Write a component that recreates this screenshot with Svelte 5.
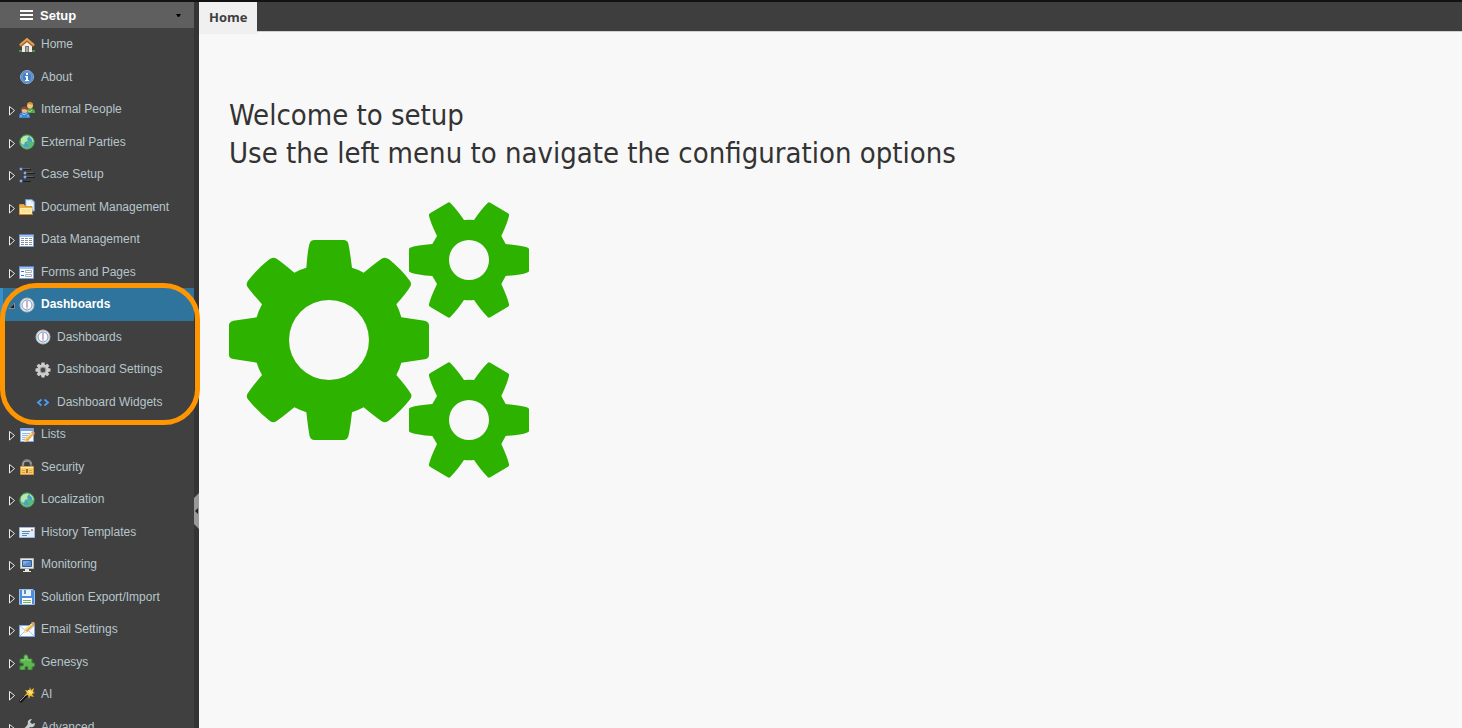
<script lang="ts">
	type MenuItem = {
		label: string;
		icon: string;
		expandable?: boolean;
		sub?: boolean;
	};

	const items: MenuItem[] = [
		{ label: 'Home', icon: 'home' },
		{ label: 'About', icon: 'info' },
		{ label: 'Internal People', icon: 'people', expandable: true },
		{ label: 'External Parties', icon: 'globe', expandable: true },
		{ label: 'Case Setup', icon: 'tree', expandable: true },
		{ label: 'Document Management', icon: 'folder', expandable: true },
		{ label: 'Data Management', icon: 'table', expandable: true },
		{ label: 'Forms and Pages', icon: 'form', expandable: true },
		{ label: 'Dashboards', icon: 'gauge', expandable: true },
		{ label: 'Dashboards', icon: 'gauge', sub: true },
		{ label: 'Dashboard Settings', icon: 'cog', sub: true },
		{ label: 'Dashboard Widgets', icon: 'code', sub: true },
		{ label: 'Lists', icon: 'list', expandable: true },
		{ label: 'Security', icon: 'lock', expandable: true },
		{ label: 'Localization', icon: 'globe', expandable: true },
		{ label: 'History Templates', icon: 'card', expandable: true },
		{ label: 'Monitoring', icon: 'monitor', expandable: true },
		{ label: 'Solution Export/Import', icon: 'disk', expandable: true },
		{ label: 'Email Settings', icon: 'mail', expandable: true },
		{ label: 'Genesys', icon: 'puzzle', expandable: true },
		{ label: 'AI', icon: 'wand', expandable: true },
		{ label: 'Advanced', icon: 'wrench', expandable: true }
	];

	let selected = $state(8);

	function select(index: number, event: MouseEvent) {
		event.preventDefault();
		selected = index;
	}
</script>

{#snippet menuIcon(name: string)}
	<svg class="icon" viewBox="0 0 16 16" aria-hidden="true">
		{#if name === 'home'}
			<path d="M0 13h16v2H0z" fill="#3f9a35" />
			<path d="M3 7l5-4 5 4v8H3z" fill="#f1eeea" />
			<path d="M6 9h4v6H6z" fill="#77736e" />
			<path d="M7 10h2v5H7z" fill="#aaa6a0" />
			<path d="M1 9l7-6 7 6" fill="none" stroke="#a9651f" stroke-width="3" />
			<path d="M1 8l7-6 7 6" fill="none" stroke="#dca058" stroke-width="2" />
		{:else if name === 'info'}
			<circle cx="8" cy="8" r="6.5" fill="#477fc4" stroke="#8bb2e2" />
			<circle cx="8" cy="8" r="5" fill="none" stroke="#76a3da" />
			<path d="M7 4h2v2H7zM6 7h3v4h1v1H6v-1h1V8H6z" fill="#fff" />
		{:else if name === 'people'}
			<path d="M8 11c0-4 1-5 3-5s5 1 5 4v1z" fill="#58a845" />
			<path d="M9 9l2 1 2-2" fill="none" stroke="#a6d894" />
			<circle cx="11" cy="3.5" r="3" fill="#f4c27b" />
			<path d="M8 3c0-4 6-4 6 0-2 0-3-1-4-1z" fill="#d79225" />
			<path d="M0 16c0-4 1-6 5-6s6 2 6 6z" fill="#3d85d5" />
			<path d="M3 11l2 2 3-2M1 14h2M8 14h2" fill="none" stroke="#9cccf5" />
			<circle cx="5.5" cy="8" r="3" fill="#efb68b" />
			<path d="M2 8c0-4 7-5 7 0-2 0-3-1-4-1z" fill="#914c2b" />
		{:else if name === 'globe'}
			<circle cx="8" cy="8" r="7.3" fill="#78c985" stroke="#41864a" />
			<circle cx="8" cy="8" r="5.6" fill="#4b9fc8" />
			<path d="M2 5c2-3 5-4 8-3L8 5l1 2-3 1-1 3-3-2z" fill="#b7e9ad" />
			<path d="M9 7l3 1 2-1c1 4-2 7-5 7V11L7 9z" fill="#54ba82" />
			<path d="M11 3c2 1 3 3 3 5" fill="none" stroke="#c5f1c2" />
		{:else if name === 'tree'}
			<path d="M4 2.500h8M7 6.500h9M7 10.500h9M4 14.500h8" stroke="#1d1d1d" />
			<path d="M4 1.500h7M7 5.500h7M7 9.500h7" stroke="#5c5f62" />
			<path d="M1 1h2v2H1zM5 5h2v2H5zM5 9h2v2H5zM1 13h2v2H1z" fill="#8dbcf5" />
			<path d="M2 0v4M0 2h4M6 4v4M4 6h4M6 8v4M4 10h4M2 12v4M0 14h4" stroke="#6ba3ee" stroke-width=".6" />
		{:else if name === 'folder'}
			<path d="M6.5.5H13L15.5 3v9h-9z" fill="#cae1fc" stroke="#6595d4" />
			<path d="M8 2h4v2h2v6H8z" fill="#edf6ff" />
			<path d="M.5 5.5H5l1 2h7v8H.5z" fill="#ecb244" stroke="#d79c35" />
			<path d="M1.5 9.5h11v5h-11z" fill="#ffe291" stroke="#fff1b5" />
			<path d="M0 15.5h14" stroke="#d48526" />
		{:else if name === 'table'}
			<path d="M.5 2.5h14v12H.5z" fill="#fff" stroke="#789bd0" />
			<path d="M1 3h13v2H1z" fill="#a5c2ed" />
			<path d="M0 2.5h15" stroke="#5580c1" />
			<path d="M2 6.5h11M2 8.5h11M2 10.5h11M2 12.5h11" stroke="#8b9198" stroke-dasharray="3 1" />
		{:else if name === 'form'}
			<path d="M.5 2.5h14v12H.5z" fill="#f8fbff" stroke="#789bd0" />
			<path d="M1 3h13v2H1z" fill="#a5c2ed" />
			<path d="M0 2.5h15" stroke="#5580c1" />
			<path d="M2 7.500h3M2 11.500h3" stroke="#367bd0" />
			<path d="M6.5 6.5h6v2h-6zM6.5 10.5h6v2h-6z" fill="#fff" stroke="#a9afb5" />
		{:else if name === 'gauge'}
			<circle cx="8" cy="8" r="7" fill="#e9edf0" stroke="#b9b8b4" />
			<circle cx="8" cy="8" r="5" fill="#f8fbff" stroke="#6e9bd8" />
			<path d="M8 4v6" stroke="#e18d7a" stroke-width="1.4" />
			<path d="M8 9v3" stroke="#a3b0bb" />
		{:else if name === 'cog'}
			<g fill="#cecece">
				<circle cx="8" cy="8" r="5.5" />
				{#each [0, 45, 90, 135] as angle}
					<path d="M6.500.500h3l.5 3v9l-.5 3h-3l-.5-3v-9z" transform="rotate({angle} 8 8)" />
				{/each}
			</g>
			<circle cx="8" cy="8" r="3.3" fill="#999" />
			<circle cx="8" cy="8" r="2.2" fill="#484848" />
		{:else if name === 'code'}
			<path d="M6.500 5.500L3 8.500l3.500 3M9.500 5.500l3.500 3-3.500 3" fill="none" stroke="#4b9df2" stroke-width="1.8" />
		{:else if name === 'list'}
			<path d="M1.5 1.5h13v13h-13z" fill="#f2f7ff" stroke="#84a9d9" />
			<path d="M1 2h14v2H1z" fill="#77a3df" />
			<path d="M3 6.5h10M3 8.5h8M3 10.5h6M3 12.5h4" stroke="#94b9e3" />
			<path d="M5 15l1-4 7-6 2 2-6 7z" fill="#ecad43" />
			<path d="M6 12l7-6" stroke="#ffe59d" stroke-width="1.5" />
			<path d="M5 15l1-3 2 2z" fill="#f8ddb1" />
			<path d="M12 5l2-1 2 2-1 2z" fill="#dd9874" />
		{:else if name === 'lock'}
			<path d="M4 8V5c0-5 8-5 8 0v3" fill="none" stroke="#777" stroke-width="2.5" />
			<path d="M4 7V5c0-4 8-4 8 0" fill="none" stroke="#b4b4b4" />
			<path d="M1.5 7.5h13v8h-13z" fill="#f5cb70" stroke="#d49939" />
			<path d="M2 8.5h12" stroke="#fff0af" />
			<path d="M3 11.5h3M3 13.5h3M10 11.5h3M10 13.5h3" stroke="#d9a349" />
			<path d="M7 10h2v4H7z" fill="#a86b1f" />
		{:else if name === 'card'}
			<path d="M.5 3.5h15v10H.5z" fill="#dfecfb" stroke="#9ab9df" />
			<path d="M1 4h14v2H1z" fill="#fff" />
			<path d="M3 7.5h8M3 9.5h7M3 11.5h5" stroke="#5c8cb0" />
			<path d="M12 5h2v2h-2z" fill="#e18567" />
		{:else if name === 'monitor'}
			<path d="M1.5 1.5h13v10h-13z" fill="#e8e8e5" stroke="#b5b5b1" />
			<path d="M3.5 3.5h9v6h-9z" fill="#5a8dd0" stroke="#315f9c" />
			<path d="M4 4h7L4 8z" fill="#83addf" />
			<path d="M6 12h4v2h2v1H4v-1h2z" fill="#e6e6e3" />
		{:else if name === 'disk'}
			<path d="M.5.5H14L15.5 2v13.5H.5z" fill="#4f8dde" stroke="#95bff0" />
			<path d="M3 1h9v6H3z" fill="#e8f1fc" />
			<path d="M5 1h2v4H5z" fill="#5f8fc6" />
			<path d="M3 9h10v6H3z" fill="#fff" />
			<path d="M4 11.5h8M4 13.5h8" stroke="#73b45d" />
		{:else if name === 'mail'}
			<path d="M.5 3.5h15v11H.5z" fill="#f5faff" stroke="#78a9e2" />
			<path d="M1 4l7 6 7-6M1 14l5-5M15 14l-5-5" fill="none" stroke="#a7c7ec" />
			<path d="M5 11l1-4 7-6 2 2-7 7z" fill="#e4a636" />
			<path d="M6 8l7-6" stroke="#ffe28e" stroke-width="1.5" />
			<path d="M5 11l1-3 2 2z" fill="#fff0cb" />
			<path d="M12 1l1-1h2l1 2-1 2z" fill="#dd9874" />
		{:else if name === 'puzzle'}
			<path
				d="M1 5h4V3c-1-3 4-3 4 0v2h4v4c3-1 4 3 1 4h-1v3H9v-2c0-2-3-2-3 0v2H1v-4h2c2 0 2-3 0-3H1z"
				fill="#5db64e"
				stroke="#398b35"
			/>
			<path d="M2 6h4V3c0-1 2-1 2 0v3h4" fill="none" stroke="#8dd47f" />
		{:else if name === 'wand'}
			<path d="M1 15L9 7" stroke="#171717" stroke-width="3" />
			<path d="M1 14L8 7" stroke="#a2a2a2" />
			<path d="M11 0l1 3 3-2-1 4 2 1-3 1 2 3-4-1-1 3-1-4-4 1 3-3-2-3 4 1z" fill="#f2b927" />
			<path d="M11 3v5M8 5h6M9 3l4 4" stroke="#fff09a" />
		{:else if name === 'wrench'}
			<path d="M3 15L8 9" stroke="#c97545" stroke-width="4" />
			<path d="M4 13L7 9" stroke="#efb084" />
			<path d="M6 9l3-4c-1-3 1-5 4-5l-2 3 2 2 3-1c0 4-3 5-5 4l-3 3z" fill="#c7cccc" />
		{/if}
	</svg>
{/snippet}

<div class="page">
	<div class="workspace">
		<aside class="sidebar">
			<div class="menu">
				<button class="menu-header" type="button">
					<svg class="burger" viewBox="0 0 13 10" aria-hidden="true">
						<path d="M0 1h13M0 5h13M0 9h13" stroke="#fff" stroke-width="2" />
					</svg>
					<span>Setup</span>
					<svg class="caret" viewBox="0 0 5 3" aria-hidden="true">
						<path d="M0 0h5L3 3H2z" />
					</svg>
				</button>
				<nav aria-label="Setup">
					<ul>
						{#each items as item, index}
							<li>
								<a
									href="#{item.icon}"
									class:selected={selected === index}
									class:sub={item.sub}
									onclick={(e) => select(index, e)}
								>
									<span class="arrow">
										{#if item.expandable}
											<svg viewBox="0 0 8 11" aria-hidden="true">
												{#if index === 8}
													<path d="M1 8.500L6.500 3v5.500z" fill="#1e1e1e" stroke="#8a8a8a" />
												{:else}
													<path d="M1.500 1.500L6.500 5.500l-5 4.500z" fill="#333" stroke="#eee" />
												{/if}
											</svg>
										{/if}
									</span>
									{@render menuIcon(item.icon)}
									<span class="label">{item.label}</span>
								</a>
								{#if index === 8}
									<span class="highlight"></span>
								{/if}
							</li>
						{/each}
					</ul>
				</nav>
			</div>
			<div class="splitter">
				<button class="collapse" type="button" aria-label="Collapse menu">
					<svg viewBox="0 0 5 36" aria-hidden="true">
						<path d="M5 0v36L0 31V5z" fill="#999" />
						<path d="M4 15v6L1 18z" fill="#222" />
					</svg>
				</button>
			</div>
		</aside>

		<main>
			<div class="tabs" role="tablist">
				<button class="tab" type="button" role="tab" aria-selected="true">Home</button>
			</div>
			<div class="content">
				<h1>Welcome to setup<br />Use the left menu to navigate the configuration options</h1>
				<svg class="gears" viewBox="27 15 900 840" aria-hidden="true">
					<defs>
						<path
							id="small-gear"
							d="M857 147Q905 151 920 157Q927 159 927 163V228Q927 231 920 233Q905 239 857 243L844 267Q864 311 867 328Q868 333 864 335L812 366Q807 370 803 366Q783 346 762 315Q747 317 732 315Q711 346 691 366Q687 370 682 366L630 335Q626 333 627 328Q630 311 651 267L637 243Q589 239 574 233Q567 231 567 228V163Q567 159 574 157Q589 151 637 147L651 123Q630 79 627 62Q626 57 630 55L682 24Q687 20 691 24Q711 44 732 75Q747 73 762 75Q783 44 803 24Q807 20 812 24L864 55Q868 57 867 62Q864 79 844 123ZM747 135a60 60 0 1 0 0 120a60 60 0 1 0 0-120Z"
						/>
					</defs>
					<path
						d="M259 218Q263 163 269 145Q273 135 283 135H371Q382 135 385 146Q389 163 396 218Q414 223 431 233Q467 203 485 191Q496 185 507 193Q545 224 570 258Q576 267 570 276Q560 293 529 328Q538 345 544 367L614 377Q627 380 627 391V479Q627 490 614 493L544 503Q538 524 529 540Q561 577 571 594Q578 602 571 612Q542 649 508 676Q496 686 484 678Q466 666 431 637Q414 646 396 652Q390 706 385 724Q382 735 371 735H283Q272 735 269 724Q265 706 259 652Q241 646 223 637Q188 666 170 678Q158 686 147 676Q112 648 83 612Q77 602 84 594Q96 576 126 540Q116 523 110 503L40 492Q27 490 27 479V391Q27 380 40 377L110 367Q116 346 126 328Q95 293 82 275Q77 267 84 257Q112 221 148 193Q159 185 170 191Q188 203 223 233Q241 223 259 218ZM327 315a120 120 0 1 0 0 240a120 120 0 1 0 0-240Z"
						fill-rule="evenodd"
					/>
					<use href="#small-gear" fill-rule="evenodd" />
					<use href="#small-gear" y="480" fill-rule="evenodd" />
				</svg>
			</div>
		</main>
	</div>
</div>

<style>
	:global(body) {
		margin: 0;
		background: #f8f8f8;
	}

	.page {
		height: 100vh;
		box-sizing: border-box;
		border-top: 2px solid #121212;
		overflow: hidden;
		font-family: 'Liberation Sans', Arial, sans-serif;
	}

	.workspace {
		display: flex;
		height: 100%;
	}

	.sidebar {
		display: flex;
		flex: none;
		background: #404040;
	}

	.menu {
		width: 194px;
	}

	.menu-header {
		display: flex;
		align-items: center;
		width: 100%;
		height: 26px;
		padding: 0 13px 0 20px;
		border: none;
		background: #5f5f5f;
		color: #fff;
		font: bold 13px 'Liberation Sans', Arial, sans-serif;
		cursor: pointer;
	}

	.burger {
		width: 13px;
		height: 10px;
		margin-right: 7px;
	}

	.caret {
		width: 5px;
		height: 3px;
		margin-left: auto;
	}

	ul {
		margin: 0;
		padding: 0;
		list-style: none;
	}

	li {
		position: relative;
	}

	li a {
		display: flex;
		align-items: center;
		box-sizing: border-box;
		height: 33px;
		padding-left: 8px;
		color: #b7c6cc;
		font-size: 12px;
		text-decoration: none;
	}

	li:nth-child(even) a {
		height: 32px;
	}

	li a.sub {
		padding-left: 24px;
	}

	li a.selected {
		padding-left: 5px;
		border-left: 3px solid #3b8fc5;
		background: #2f749c;
		color: #fff;
		font-weight: bold;
	}

	.arrow {
		width: 11px;
		height: 11px;
		margin-top: 2px;
	}

	.arrow svg {
		display: block;
		width: 8px;
		height: 11px;
	}

	.icon {
		width: 16px;
		height: 16px;
		margin-right: 6px;
	}

	.label {
		line-height: 16px;
		padding-bottom: 1px;
	}

	/* Orange callout around the expanded group */
	.highlight {
		position: absolute;
		z-index: 1;
		top: -5px;
		left: 0;
		box-sizing: border-box;
		width: 200px;
		height: 142px;
		border: 5px solid #ff9500;
		border-radius: 36px;
		pointer-events: none;
	}

	.splitter {
		display: flex;
		align-items: center;
		width: 5px;
		background: #343434;
	}

	.collapse {
		margin-top: 292px;
		padding: 0;
		border: none;
		background: none;
		cursor: pointer;
	}

	.collapse svg {
		display: block;
		width: 5px;
		height: 36px;
	}

	main {
		flex: 1;
		min-width: 0;
	}

	.tabs {
		display: flex;
		align-items: flex-start;
		box-sizing: border-box;
		height: 30px;
		border-bottom: 1px solid #d0d0d0;
		background: #3e3e3e;
	}

	.tab {
		flex: none;
		height: 32px;
		padding: 0 10px 2px;
		border: none;
		background: #f0f0f0;
		color: #3e3e3e;
		font: bold 13px 'Open Sans', Tahoma, sans-serif;
	}

	.content {
		padding: 64px 30px;
	}

	h1 {
		margin: 0 0 28px;
		color: #333;
		font: 29px/38px 'DejaVu Sans Condensed', Tahoma, sans-serif;
	}

	.gears {
		display: block;
		width: 300px;
		height: 280px;
		fill: #2db200;
	}
</style>
